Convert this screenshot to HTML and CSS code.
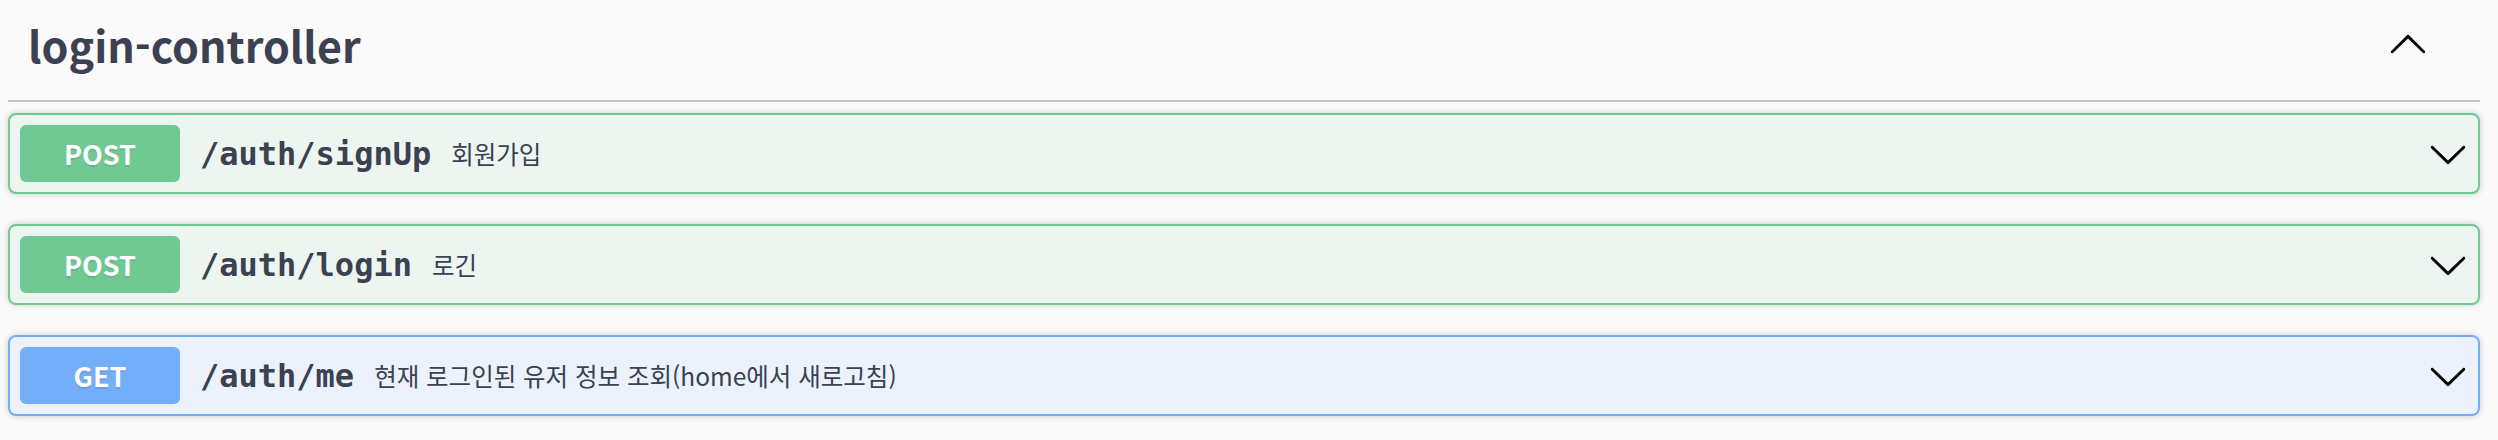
FILE: index.html
```html
<!DOCTYPE html>
<html lang="ko">
<head>
<meta charset="utf-8">
<title>login-controller</title>
<link rel="stylesheet" href="styles.css">
</head>
<body>
<div class="wrapper">
  <section class="tag-section">
    <div class="tag">
      <h3 class="tag-title">login-controller</h3>
      <button class="expand" aria-label="collapse">
        <svg class="arrow" viewBox="0 0 20 20" width="40" height="40"><path d="M17.418 14.908c.272.268.709.268.979 0s.271-.701 0-.969l-7.908-7.830c-.27-.268-.707-.268-.979 0l-7.908 7.83c-.27.268-.27.701 0 .969.271.268.709.268.979 0L10 7.741l7.418 7.167z"/></svg>
      </button>
    </div>

    <div class="opblock post">
      <div class="summary">
        <span class="method">POST</span>
        <span class="path">/auth/signUp</span>
        <span class="desc">회원가입</span>
        <svg class="arrow" viewBox="0 0 20 20" width="40" height="40"><path d="M17.418 6.109c.272-.268.709-.268.979 0s.271.701 0 .969l-7.908 7.83c-.27.268-.707.268-.979 0l-7.908-7.83c-.27-.268-.27-.701 0-.969.271-.268.709-.268.979 0L10 13.25l7.418-7.141z"/></svg>
      </div>
    </div>

    <div class="opblock post">
      <div class="summary">
        <span class="method">POST</span>
        <span class="path">/auth/login</span>
        <span class="desc">로긴</span>
        <svg class="arrow" viewBox="0 0 20 20" width="40" height="40"><path d="M17.418 6.109c.272-.268.709-.268.979 0s.271.701 0 .969l-7.908 7.83c-.27.268-.707.268-.979 0l-7.908-7.83c-.27-.268-.27-.701 0-.969.271-.268.709-.268.979 0L10 13.25l7.418-7.141z"/></svg>
      </div>
    </div>

    <div class="opblock get">
      <div class="summary">
        <span class="method">GET</span>
        <span class="path">/auth/me</span>
        <span class="desc">현재 로그인된 유저 정보 조회(home에서 새로고침)</span>
        <svg class="arrow" viewBox="0 0 20 20" width="40" height="40"><path d="M17.418 6.109c.272-.268.709-.268.979 0s.271.701 0 .969l-7.908 7.83c-.27.268-.707.268-.979 0l-7.908-7.83c-.27-.268-.27-.701 0-.969.271-.268.709-.268.979 0L10 13.25l7.418-7.141z"/></svg>
      </div>
    </div>
  </section>
</div>
</body>
</html>
```
FILE: styles.css
```css
html, body {
  margin: 0;
  padding: 0;
  background: #fafafa;
}

body {
  font-family: "Noto Sans CJK KR", "Noto Sans", sans-serif;
  color: #3b4151;
}

.wrapper {
  padding: 0 18px 0 8px;
}

.tag {
  display: flex;
  align-items: flex-start;
  justify-content: space-between;
  padding: 0 52px 0 20px;
  border-bottom: 2px solid rgba(59, 65, 81, 0.3);
  margin-bottom: 11px;
}

.tag-title {
  margin: 0;
  padding: 14px 0 26px;
  font-size: 43px;
  line-height: 60px;
  font-weight: 700;
  color: #3b4151;
}

.expand {
  margin-top: 23px;
  padding: 0;
  border: 0;
  background: none;
  display: flex;
}

.arrow {
  display: block;
  flex: none;
  fill: #000;
}

.opblock {
  border: 2px solid;
  border-radius: 8px;
  box-shadow: 0 0 6px rgba(0, 0, 0, 0.19);
  margin-bottom: 30px;
}

.opblock.post {
  border-color: #70c995;
  background: #ecf5f0;
}

.opblock.get {
  border-color: #75aef8;
  background: #ebf2fb;
}

.summary {
  display: flex;
  align-items: center;
  padding: 10px;
}

.method {
  flex: none;
  width: 160px;
  height: 57px;
  border-radius: 6px;
  display: flex;
  align-items: center;
  justify-content: center;
  color: #fff;
  font-size: 27px;
  font-weight: 700;
  text-shadow: 0 2px 0 rgba(0, 0, 0, 0.1);
}

.post .method {
  background: #70c995;
}

.get .method {
  background: #75aef8;
}

.path {
  padding: 0 20px;
  font-family: "DejaVu Sans Mono", "Liberation Mono", monospace;
  font-size: 32px;
  font-weight: 700;
  color: #3b4151;
}

.desc {
  flex: 1;
  font-size: 24.5px;
  color: #3b4151;
}
```
